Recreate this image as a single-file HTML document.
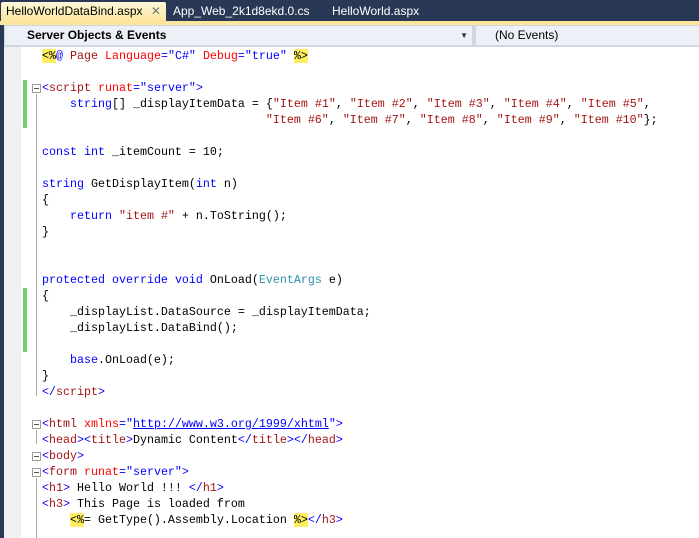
<!DOCTYPE html>
<html><head><meta charset="utf-8"><style>
*{margin:0;padding:0;box-sizing:border-box}
body{width:699px;height:538px;overflow:hidden;background:#293955;position:relative;font-family:"Liberation Sans",sans-serif}
#tabs{position:absolute;left:0;top:0;width:699px;height:21px;background:#293955}
.tab{position:absolute;top:2px;height:19px;font-size:12px;line-height:19px;color:#fff;padding-left:5px}
.act{left:1px;width:165px;background:linear-gradient(#fdf6d8,#fce7a0);color:#000;border-radius:2px 2px 0 0}
#yb{position:absolute;left:0;top:21px;width:699px;height:4px;background:#fce59c}
#tb{position:absolute;left:4px;top:25px;width:695px;height:22px;background:#cfd6e5}
.dd{position:absolute;top:1px;height:19px;background:#eef0f7;font-size:12px;line-height:19px}
#code{position:absolute;left:4px;top:47px;width:695px;height:491px;background:#fff}
#gut{position:absolute;left:0;top:0;width:17px;height:491px;background:#f0f0f0}
.g{position:absolute;left:19px;width:4px;background:#6ed36e}
pre{position:absolute;left:38px;top:1px;font-family:"Liberation Mono",monospace;font-size:11.66px;line-height:16px;color:#000}
.k{color:#0000ff}.t{color:#a31515}.a{color:#ff0000}.s{color:#a31515}.y{background:#ffee62}.c{color:#2b91af}.u{color:#0000ff;text-decoration:underline}
.bx{position:absolute;left:28px;width:9px;height:9px;border:1px solid #999;background:#fff}
.bx:after{content:"";position:absolute;left:1px;top:3px;width:5px;height:1px;background:#555}
.vl{position:absolute;left:32px;width:1px;background:#aaa}
</style></head><body>
<div id="tabs">
<div class="tab act">HelloWorldDataBind.aspx <span style="color:#777;margin-left:5px">✕</span></div>
<div class="tab" style="left:168px">App_Web_2k1d8ekd.0.cs</div>
<div class="tab" style="left:327px">HelloWorld.aspx</div>
</div>
<div id="yb"></div>
<div id="tb">
<div class="dd" style="left:1px;width:467px;font-weight:bold;padding-left:22px">Server Objects &amp; Events<span style="position:absolute;right:4px;top:0;font-size:8px;color:#333">▼</span></div>
<div class="dd" style="left:472px;width:223px;padding-left:19px">(No Events)</div>
</div>
<div id="code">
<div id="gut"></div>
<div class="g" style="top:33px;height:48px"></div>
<div class="g" style="top:241px;height:64px"></div>
<div class="bx" style="top:37px"></div><div class="vl" style="top:47px;height:302px"></div>
<div class="bx" style="top:373px"></div><div class="vl" style="top:383px;height:14px"></div>
<div class="bx" style="top:405px"></div>
<div class="bx" style="top:421px"></div><div class="vl" style="top:431px;height:60px"></div>
<pre><span class="y">&lt;%</span><span class="k">@</span> <span class="t">Page</span> <span class="a">Language</span><span class="k">="C#"</span> <span class="a">Debug</span><span class="k">="true"</span> <span class="y">%&gt;</span>

<span class="k">&lt;</span><span class="t">script</span> <span class="a">runat</span><span class="k">="server"&gt;</span>
    <span class="k">string</span>[] _displayItemData = {<span class="s">"Item #1"</span>, <span class="s">"Item #2"</span>, <span class="s">"Item #3"</span>, <span class="s">"Item #4"</span>, <span class="s">"Item #5"</span>,
                                <span class="s">"Item #6"</span>, <span class="s">"Item #7"</span>, <span class="s">"Item #8"</span>, <span class="s">"Item #9"</span>, <span class="s">"Item #10"</span>};

<span class="k">const</span> <span class="k">int</span> _itemCount = 10;

<span class="k">string</span> GetDisplayItem(<span class="k">int</span> n)
{
    <span class="k">return</span> <span class="s">"item #"</span> + n.ToString();
}


<span class="k">protected</span> <span class="k">override</span> <span class="k">void</span> OnLoad(<span class="c">EventArgs</span> e)
{
    _displayList.DataSource = _displayItemData;
    _displayList.DataBind();

    <span class="k">base</span>.OnLoad(e);
}
<span class="k">&lt;/</span><span class="t">script</span><span class="k">&gt;</span>

<span class="k">&lt;</span><span class="t">html</span> <span class="a">xmlns</span><span class="k">="</span><span class="u">http://www.w3.org/1999/xhtml</span><span class="k">"&gt;</span>
<span class="k">&lt;</span><span class="t">head</span><span class="k">&gt;&lt;</span><span class="t">title</span><span class="k">&gt;</span>Dynamic Content<span class="k">&lt;/</span><span class="t">title</span><span class="k">&gt;&lt;/</span><span class="t">head</span><span class="k">&gt;</span>
<span class="k">&lt;</span><span class="t">body</span><span class="k">&gt;</span>
<span class="k">&lt;</span><span class="t">form</span> <span class="a">runat</span><span class="k">="server"&gt;</span>
<span class="k">&lt;</span><span class="t">h1</span><span class="k">&gt;</span> Hello World !!! <span class="k">&lt;/</span><span class="t">h1</span><span class="k">&gt;</span>
<span class="k">&lt;</span><span class="t">h3</span><span class="k">&gt;</span> This Page is loaded from
    <span class="y">&lt;%</span>= GetType().Assembly.Location <span class="y">%&gt;</span><span class="k">&lt;/</span><span class="t">h3</span><span class="k">&gt;</span>
</pre>
</div>
</body></html>
